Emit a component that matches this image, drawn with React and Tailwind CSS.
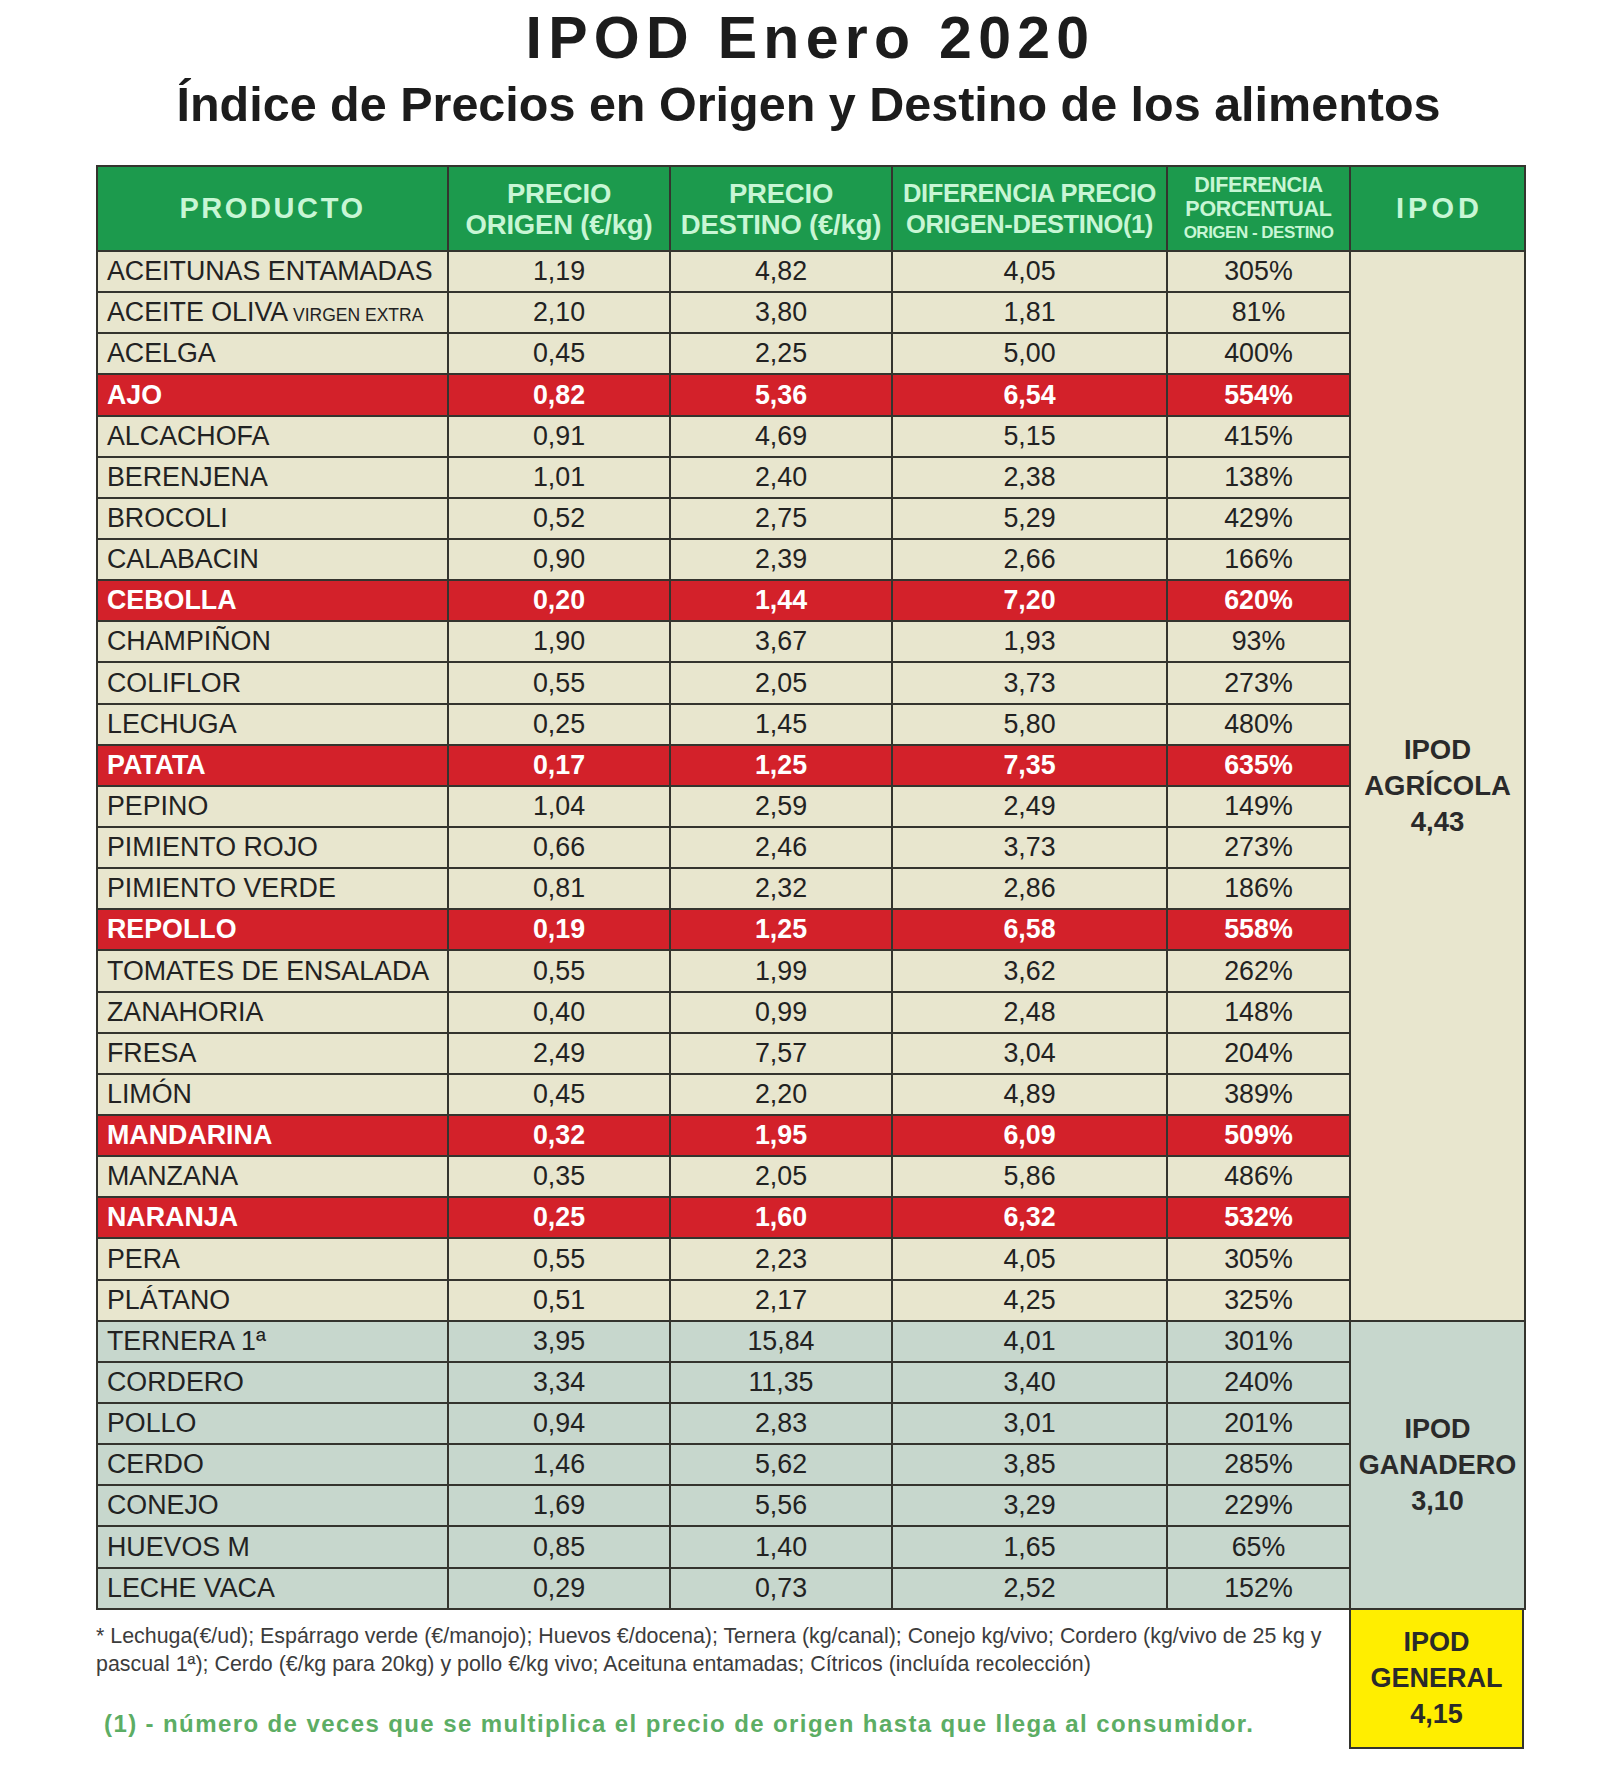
import React from "react";

const agri = [
  ["ACEITUNAS ENTAMADAS", "1,19", "4,82", "4,05", "305%"],
  ["ACEITE OLIVA", "2,10", "3,80", "1,81", "81%", false, "VIRGEN EXTRA"],
  ["ACELGA", "0,45", "2,25", "5,00", "400%"],
  ["AJO", "0,82", "5,36", "6,54", "554%", true],
  ["ALCACHOFA", "0,91", "4,69", "5,15", "415%"],
  ["BERENJENA", "1,01", "2,40", "2,38", "138%"],
  ["BROCOLI", "0,52", "2,75", "5,29", "429%"],
  ["CALABACIN", "0,90", "2,39", "2,66", "166%"],
  ["CEBOLLA", "0,20", "1,44", "7,20", "620%", true],
  ["CHAMPIÑON", "1,90", "3,67", "1,93", "93%"],
  ["COLIFLOR", "0,55", "2,05", "3,73", "273%"],
  ["LECHUGA", "0,25", "1,45", "5,80", "480%"],
  ["PATATA", "0,17", "1,25", "7,35", "635%", true],
  ["PEPINO", "1,04", "2,59", "2,49", "149%"],
  ["PIMIENTO ROJO", "0,66", "2,46", "3,73", "273%"],
  ["PIMIENTO VERDE", "0,81", "2,32", "2,86", "186%"],
  ["REPOLLO", "0,19", "1,25", "6,58", "558%", true],
  ["TOMATES DE ENSALADA", "0,55", "1,99", "3,62", "262%"],
  ["ZANAHORIA", "0,40", "0,99", "2,48", "148%"],
  ["FRESA", "2,49", "7,57", "3,04", "204%"],
  ["LIMÓN", "0,45", "2,20", "4,89", "389%"],
  ["MANDARINA", "0,32", "1,95", "6,09", "509%", true],
  ["MANZANA", "0,35", "2,05", "5,86", "486%"],
  ["NARANJA", "0,25", "1,60", "6,32", "532%", true],
  ["PERA", "0,55", "2,23", "4,05", "305%"],
  ["PLÁTANO", "0,51", "2,17", "4,25", "325%"],
];

const gan = [
  ["TERNERA 1ª", "3,95", "15,84", "4,01", "301%"],
  ["CORDERO", "3,34", "11,35", "3,40", "240%"],
  ["POLLO", "0,94", "2,83", "3,01", "201%"],
  ["CERDO", "1,46", "5,62", "3,85", "285%"],
  ["CONEJO", "1,69", "5,56", "3,29", "229%"],
  ["HUEVOS M", "0,85", "1,40", "1,65", "65%"],
  ["LECHE VACA", "0,29", "0,73", "2,52", "152%"],
];

const bd = "border-2 border-[#34342e]";

function DataCells({ row, bg }) {
  const red = row[5];
  const cellBg = red ? "bg-[#d3212a] text-white font-bold" : bg + " text-[#222]";
  return (
    <>
      <td className={`${bd} ${cellBg} h-[41.15px] pl-[9px] text-left whitespace-nowrap`}>
        {row[0]}
        {row[6] ? <span className="text-[17.5px]"> {row[6]}</span> : null}
      </td>
      {[1, 2, 3, 4].map((i) => (
        <td key={i} className={`${bd} ${cellBg} text-center`}>
          {row[i]}
        </td>
      ))}
    </>
  );
}

export default function App() {
  return (
    <div
      className="w-[1600px] h-[1773px] bg-white pt-[9px]"
      style={{ fontFamily: '"Liberation Sans", Arial, sans-serif' }}
    >
      <h1 className="pl-[21px] text-center text-[59px] leading-[58px] font-bold tracking-[6.3px] text-[#1c1c1c]">
        IPOD Enero 2020
      </h1>
      <h2 className="mt-[13px] pl-[17px] text-center text-[48.5px] leading-[48px] font-bold text-[#1c1c1c]">
        Índice de Precios en Origen y Destino de los alimentos
      </h2>

      <div className="ml-[96px] mt-[37px] w-[1428px]">
        <table className="border-collapse table-fixed w-[1428px] text-[26.8px] leading-none">
          <colgroup>
            <col className="w-[351px]" />
            <col className="w-[222px]" />
            <col className="w-[222px]" />
            <col className="w-[275px]" />
            <col className="w-[183px]" />
            <col className="w-[175px]" />
          </colgroup>
          <thead>
            <tr className="bg-[#1c9a4d] text-[#c8f6d5] font-bold">
              <th className={`${bd} h-[85px] text-[29px] tracking-[2.6px] font-bold`}>PRODUCTO</th>
              <th className={`${bd} text-[27.5px] leading-[31px] tracking-[-0.2px] font-bold`}>
                PRECIO
                <br />
                ORIGEN (€/kg)
              </th>
              <th className={`${bd} text-[27.5px] leading-[31px] tracking-[-0.2px] font-bold`}>
                PRECIO
                <br />
                DESTINO (€/kg)
              </th>
              <th className={`${bd} text-[25.5px] leading-[31px] tracking-[-0.4px] font-bold`}>
                DIFERENCIA PRECIO
                <br />
                ORIGEN-DESTINO(1)
              </th>
              <th className={`${bd} font-bold`}>
                <div className="text-[21.5px] leading-[24px] tracking-[-0.3px]">DIFERENCIA</div>
                <div className="text-[21.5px] leading-[24px] tracking-[-0.3px]">PORCENTUAL</div>
                <div className="text-[17px] leading-[24px] tracking-[-0.5px]">ORIGEN - DESTINO</div>
              </th>
              <th className={`${bd} pl-[4px] text-[29px] tracking-[4px] font-bold`}>IPOD</th>
            </tr>
          </thead>
          <tbody>
            {agri.map((row, idx) => (
              <tr key={row[0]}>
                <DataCells row={row} bg="bg-[#e8e6ce]" />
                {idx === 0 ? (
                  <td
                    rowSpan={agri.length}
                    className={`${bd} bg-[#e8e6ce] text-center align-middle text-[27.5px] leading-[36px] font-bold text-[#2a2a2a]`}
                  >
                    IPOD
                    <br />
                    AGRÍCOLA
                    <br />
                    4,43
                  </td>
                ) : null}
              </tr>
            ))}
            {gan.map((row, idx) => (
              <tr key={row[0]}>
                <DataCells row={row} bg="bg-[#c7d7cd]" />
                {idx === 0 ? (
                  <td
                    rowSpan={gan.length}
                    className={`${bd} bg-[#c7d7cd] text-center align-middle text-[27px] leading-[36px] font-bold text-[#2a2a2a]`}
                  >
                    IPOD
                    <br />
                    GANADERO
                    <br />
                    3,10
                  </td>
                ) : null}
              </tr>
            ))}
          </tbody>
        </table>

        <div className="flex">
          <div className="w-[1253px]">
            <p className="mt-[12px] text-[21.4px] leading-[28px] text-[#3c3c3c] whitespace-nowrap">
              * Lechuga(€/ud); Espárrago verde (€/manojo); Huevos €/docena); Ternera (kg/canal); Conejo kg/vivo; Cordero (kg/vivo de 25 kg y
              <br />
              pascual 1ª); Cerdo (€/kg para 20kg) y pollo €/kg vivo; Aceituna entamadas; Cítricos (incluída recolección)
            </p>
            <p className="mt-[32px] ml-[8px] text-[24px] leading-[28px] font-bold tracking-[1.4px] text-[#5cad64] whitespace-nowrap">
              (1) - número de veces que se multiplica el precio de origen hasta que llega al consumidor.
            </p>
          </div>
          <div className="w-[175px] h-[139px] bg-[#ffee00] border-2 border-t-0 border-[#34342e] flex items-center justify-center text-center text-[27px] leading-[36px] font-bold text-[#2a2a2a]">
            <div>
              IPOD
              <br />
              GENERAL
              <br />
              4,15
            </div>
          </div>
        </div>
      </div>
    </div>
  );
}
